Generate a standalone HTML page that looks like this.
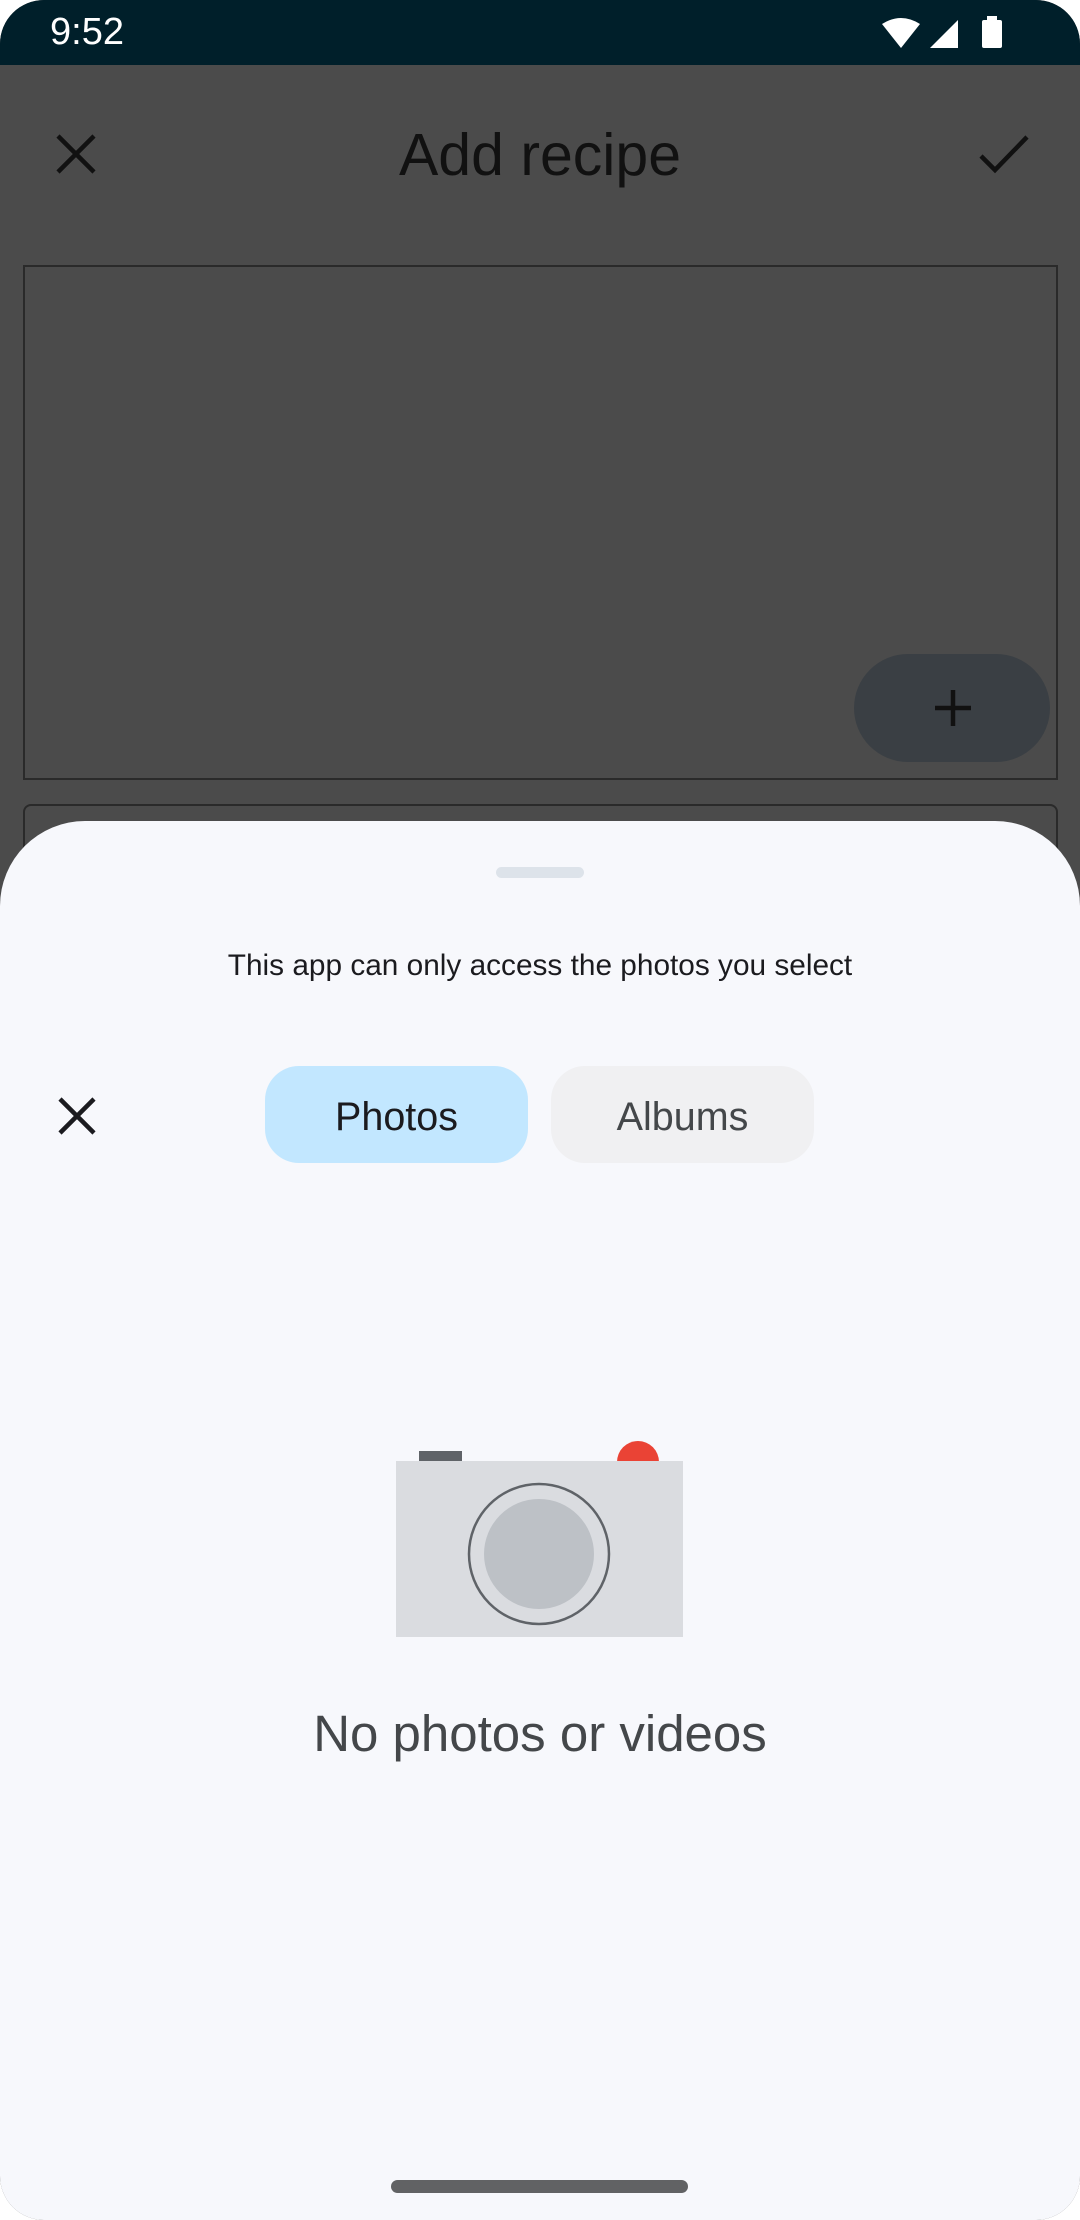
<!DOCTYPE html>
<html><head><meta charset="utf-8"><style>
html,body{margin:0;padding:0;background:#fff;}
body{width:1080px;height:2220px;position:relative;overflow:hidden;font-family:"Liberation Sans",sans-serif;}
#screen{position:absolute;left:0;top:0;width:1080px;height:2220px;border-radius:44px;overflow:hidden;background:#4b4b4b;}
#status{position:absolute;left:0;top:0;width:1080px;height:65px;background:#001f2a;}
.abs{position:absolute;}
#sheet{position:absolute;left:0;top:821px;width:1080px;height:1399px;background:#f7f8fc;border-radius:85px 85px 0 0;}
</style></head><body><div id="screen">
<div id="status">
<div class="abs" style="left:50px;top:11px;color:#fff;font-size:38px;">9:52</div>
<svg class="abs" style="left:880px;top:16px" width="130" height="34" viewBox="0 0 130 34">
<path d="M2 8 Q21 -4 40 8 L21 32 Z" fill="#fff"/>
<path d="M50 32 L78 4 L78 32 Z" fill="#fff"/>
<rect x="102" y="4" width="20" height="28" rx="2" fill="#fff"/><rect x="107" y="0" width="10" height="5" fill="#fff"/>
</svg>
</div>
<svg class="abs" style="left:56px;top:134px" width="40" height="40" viewBox="0 0 40 40"><path d="M2 2L38 38M38 2L2 38" stroke="#111" stroke-width="4.5"/></svg>
<div class="abs" style="left:0;width:1080px;top:121px;text-align:center;font-size:59px;color:#111;">Add recipe</div>
<svg class="abs" style="left:978px;top:132px" width="52" height="44" viewBox="0 0 52 44"><path d="M3 24L17 38L49 5" stroke="#111" stroke-width="4.5" fill="none"/></svg>
<div class="abs" style="left:23px;top:265px;width:1031px;height:511px;border:2px solid #2a2a2a;"></div>
<div class="abs" style="left:854px;top:654px;width:196px;height:108px;border-radius:54px;background:#3a3f44;"></div>
<svg class="abs" style="left:933px;top:688px" width="40" height="40" viewBox="0 0 40 40"><path d="M20 2V38M2 20H38" stroke="#111" stroke-width="4.5"/></svg>
<div class="abs" style="left:23px;top:804px;width:1031px;height:100px;border:2px solid #2a2a2a;border-radius:8px;"></div>
<div id="sheet">
<div class="abs" style="left:496px;top:46px;width:88px;height:11px;border-radius:6px;background:#dde3ea;"></div>
<div class="abs" style="left:0;width:1080px;top:128px;text-align:center;font-size:29.8px;color:#1b1b1f;">This app can only access the photos you select</div>
<svg class="abs" style="left:58px;top:276px" width="38" height="38" viewBox="0 0 38 38"><path d="M2 2L36 36M36 2L2 36" stroke="#1b1b1f" stroke-width="4.5"/></svg>
<div class="abs" style="left:265px;top:245px;width:263px;height:97px;border-radius:34px;background:#c2e7ff;color:#1b1b1f;font-size:39.5px;line-height:91px;text-align:center;"><span style="position:relative;top:6px">Photos</span></div>
<div class="abs" style="left:551px;top:245px;width:263px;height:97px;border-radius:34px;background:#f0f0f2;color:#44474a;font-size:39.5px;line-height:91px;text-align:center;"><span style="position:relative;top:6px">Albums</span></div>
<svg class="abs" style="left:396px;top:615px" width="287" height="205" viewBox="0 0 287 205">
<rect x="23" y="15" width="43" height="11" fill="#5f6368"/>
<circle cx="242" cy="26" r="21" fill="#ea4335"/>
<rect x="0" y="25" width="287" height="176" fill="#dadce0"/>
<circle cx="143" cy="118" r="70" fill="#dadce0" stroke="#5f6368" stroke-width="2.5"/>
<circle cx="143" cy="118" r="55" fill="#bdc1c6"/>
</svg>
<div class="abs" style="left:0;width:1080px;top:883px;text-align:center;font-size:51px;color:#44474a;">No photos or videos</div>
<div class="abs" style="left:391px;top:1359px;width:297px;height:13px;border-radius:7px;background:#616264;"></div>
</div>
</div></body></html>
